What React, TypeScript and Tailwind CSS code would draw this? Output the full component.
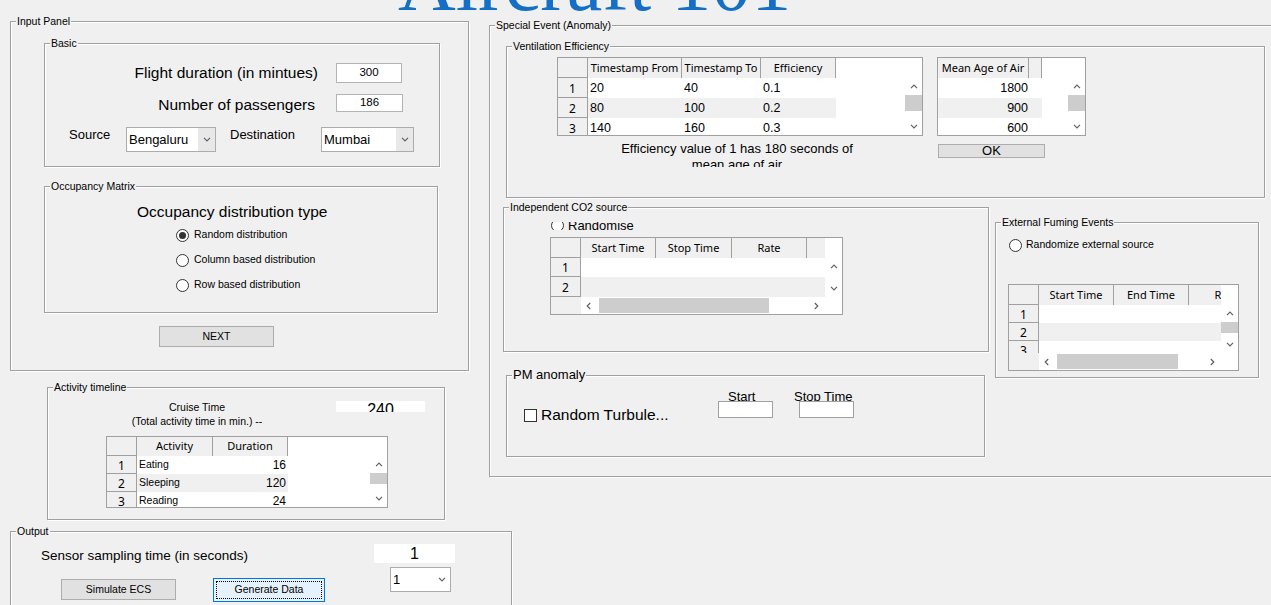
import React from 'react';

const etched = 'border border-[#a0a0a0] shadow-[inset_1px_1px_0_#fff,1px_1px_0_#fff]';

const Up = () => (
  <svg width="8" height="5" viewBox="0 0 8 5">
    <path d="M1 4.2L4 1.2L7 4.2" fill="none" stroke="#606060" strokeWidth="1.2" />
  </svg>
);
const Down = () => (
  <svg width="8" height="5" viewBox="0 0 8 5">
    <path d="M1 0.8L4 3.8L7 0.8" fill="none" stroke="#606060" strokeWidth="1.2" />
  </svg>
);
const Left = () => (
  <svg width="5" height="8" viewBox="0 0 5 8">
    <path d="M4.2 1L1.2 4L4.2 7" fill="none" stroke="#606060" strokeWidth="1.2" />
  </svg>
);
const Right = () => (
  <svg width="5" height="8" viewBox="0 0 5 8">
    <path d="M0.8 1L3.8 4L0.8 7" fill="none" stroke="#606060" strokeWidth="1.2" />
  </svg>
);

type PanelProps = { label: string; className: string; labelClass?: string; children?: React.ReactNode };

function Panel({ label, className, labelClass = 'top-[-7px] text-[10.5px] leading-[13px]', children }: PanelProps) {
  return (
    <div className={`relative shrink-0 ${etched} ${className}`}>
      <span className={`absolute left-[5px] bg-[#f0f0f0] px-[1px] text-black ${labelClass}`}>{label}</span>
      {children}
    </div>
  );
}

function Radio({ on = false }: { on?: boolean }) {
  return (
    <span className="flex h-[13px] w-[13px] shrink-0 items-center justify-center rounded-full border border-[#333] bg-white">
      {on && <span className="h-[7px] w-[7px] rounded-full bg-[#333]" />}
    </span>
  );
}

function Combo({ value, className }: { value: string; className: string }) {
  return (
    <div className={`flex shrink-0 border border-[#acacac] bg-white ${className}`}>
      <div className="flex flex-1 items-center pl-[2px] text-[13px] text-black">{value}</div>
      <div className="flex w-[17px] items-center justify-center bg-[#e8e8e8]">
        <Down />
      </div>
    </div>
  );
}

type Col = { label: string; w: string; align?: string };
type TableProps = {
  box: string;
  rowHdr?: boolean;
  cols: Col[];
  rows: string[][];
  rowH: string[];
  headH: string;
  cellText: string;
  thumb?: string;
  hthumb?: string;
};

function UiTable({ box, rowHdr = true, cols, rows, rowH, headH, cellText, thumb, hthumb }: TableProps) {
  return (
    <div className={`flex shrink-0 flex-col overflow-hidden border border-[#a0a0a0] bg-white ${box}`}>
      <div className="flex min-h-0 flex-1">
        <div className="flex min-w-0 flex-1 flex-col overflow-hidden">
          <div className={`flex shrink-0 ${headH}`}>
            {rowHdr && <div className="w-[30px] shrink-0 border-r border-b border-[#a0a0a0] bg-[#f0f0f0]" />}
            {cols.map((c, j) => (
              <div
                key={j}
                className={`flex shrink-0 items-center justify-center border-r border-[#a0a0a0] bg-[#f0f0f0] font-['Noto_Sans',sans-serif] text-[11px] whitespace-nowrap text-black ${c.w}`}
              >
                {c.label}
              </div>
            ))}
            <div className="flex-1 bg-white" />
          </div>
          {rows.map((r, i) => (
            <div key={i} className={`flex shrink-0 ${rowH[i]}`}>
              {rowHdr && (
                <div className="flex w-[30px] shrink-0 items-center justify-center border-r border-b border-[#a0a0a0] bg-[#f0f0f0] pt-[2px] font-['Noto_Sans',sans-serif] text-[12px] text-black">
                  {i + 1}
                </div>
              )}
              {cols.map((c, j) => (
                <div
                  key={j}
                  className={`flex shrink-0 items-center whitespace-nowrap text-black ${c.w} ${c.align ?? ''} ${i % 2 ? 'bg-[#f0f0f0]' : 'bg-white'} ${cellText}`}
                >
                  {r[j] ?? ''}
                </div>
              ))}
              <div className="flex-1 bg-white" />
            </div>
          ))}
        </div>
        <div className="flex w-[17px] shrink-0 flex-col bg-white">
          <div className={`shrink-0 ${headH}`} />
          <div className="flex h-[17px] shrink-0 items-center justify-center">
            <Up />
          </div>
          {thumb && <div className={`shrink-0 bg-[#cdcdcd] ${thumb}`} />}
          <div className="flex-1" />
          <div className="flex h-[17px] shrink-0 items-center justify-center">
            <Down />
          </div>
        </div>
      </div>
      {hthumb && (
        <div className="flex h-[17px] shrink-0">
          <div className="w-[30px] shrink-0 bg-[#f0f0f0]" />
          <div className="flex flex-1 items-center bg-white">
            <div className="flex h-full w-[15px] shrink-0 items-center justify-center">
              <Left />
            </div>
            <div className={`h-[15px] shrink-0 bg-[#cdcdcd] ${hthumb}`} />
            <div className="flex-1" />
            <div className="flex h-full w-[17px] shrink-0 items-center justify-center">
              <Right />
            </div>
          </div>
          <div className="w-[17px] shrink-0 bg-white" />
        </div>
      )}
    </div>
  );
}

const Btn = ({ label, className }: { label: string; className: string }) => (
  <div className={`flex shrink-0 items-center justify-center border border-[#adadad] bg-[#e1e1e1] text-[10.5px] text-black ${className}`}>
    {label}
  </div>
);

const Field = ({ value, className }: { value: string; className: string }) => (
  <div className={`flex shrink-0 items-center justify-center border border-[#b4b4b4] bg-white text-[11.5px] text-black ${className}`}>
    {value}
  </div>
);

export default function App() {
  return (
    <div className="h-[605px] w-[1271px] overflow-hidden bg-[#f0f0f0] font-['Liberation_Sans',Arial,sans-serif] text-black">
      {/* title, mostly scrolled off the top */}
      <div className="h-[14px] overflow-hidden">
        <div className="mt-[-57px] pl-[398px] font-['Liberation_Serif',serif] text-[80px] leading-[80px] whitespace-nowrap text-[#1570c5]">
          Aircraft 101
        </div>
      </div>

      <div className="mt-[7px] flex items-start">
        {/* left column */}
        <div className="ml-[10px] flex w-[459px] shrink-0 flex-col">
          <Panel label="Input Panel" className="h-[350px] w-[459px]">
            <Panel label="Basic" className="mt-[21px] ml-[33px] h-[124px] w-[396px]">
              <div className="mt-[19px] flex items-center">
                <div className="w-[273px] text-right text-[15.5px] leading-[20px]">Flight duration (in mintues)</div>
                <Field value="300" className="ml-[18px] h-[20px] w-[66px]" />
              </div>
              <div className="mt-[11px] flex items-start">
                <div className="mt-[2px] w-[270px] text-right text-[15.5px] leading-[18px]">Number of passengers</div>
                <Field value="186" className="ml-[21px] h-[18px] w-[67px]" />
              </div>
              <div className="mt-[13px] flex items-start">
                <div className="ml-[24px] w-[57px] text-[13px] leading-[15px]">Source</div>
                <Combo value="Bengaluru" className="h-[25px] w-[90px]" />
                <div className="ml-[14px] w-[91px] text-[13px] leading-[15px]">Destination</div>
                <Combo value="Mumbai" className="h-[25px] w-[93px]" />
              </div>
            </Panel>

            <Panel label="Occupancy Matrix" className="mt-[19px] ml-[33px] h-[127px] w-[394px]">
              <div className="mt-[16px] ml-[92px] text-[15.5px] leading-[18px]">Occupancy distribution type</div>
              <div className="mt-[7px] ml-[131px] flex h-[14px] items-center gap-[5px] text-[10.5px]">
                <Radio on />
                <span>Random distribution</span>
              </div>
              <div className="mt-[11px] ml-[131px] flex h-[14px] items-center gap-[5px] text-[10.5px]">
                <Radio />
                <span>Column based distribution</span>
              </div>
              <div className="mt-[11px] ml-[131px] flex h-[14px] items-center gap-[5px] text-[10.5px]">
                <Radio />
                <span>Row based distribution</span>
              </div>
            </Panel>

            <Btn label="NEXT" className="mt-[13px] ml-[148px] h-[21px] w-[115px]" />
          </Panel>

          <Panel label="Activity timeline" className="mt-[16px] ml-[37px] h-[133px] w-[398px]">
            <div className="flex items-start">
              <div className="mt-[12px] ml-[79px] w-[140px] text-center text-[10.5px] leading-[14px]">
                <div>Cruise Time</div>
                <div className="whitespace-nowrap">(Total activity time in min.) --</div>
              </div>
              <div className="mt-[13px] ml-[69px] h-[11px] w-[89px] overflow-hidden bg-white text-center text-[16px] leading-[18px]">
                240
              </div>
            </div>
            <div className="mt-[8px] ml-[58px]">
              <UiTable
                box="h-[72px] w-[282px]"
                headH="h-[19px]"
                rowH={['h-[18px]', 'h-[18px]', 'h-[18px]']}
                cols={[
                  { label: 'Activity', w: 'w-[76px]', align: 'justify-start pl-[2px] text-[10.5px]' },
                  { label: 'Duration', w: 'w-[75px]', align: 'justify-end pr-[2px] text-[12px]' },
                ]}
                rows={[
                  ['Eating', '16'],
                  ['Sleeping', '120'],
                  ['Reading', '24'],
                ]}
                cellText=""
                thumb="h-[11px]"
              />
            </div>
          </Panel>
        </div>

        {/* right column */}
        <Panel label="Special Event (Anomaly)" className="mt-[4px] ml-[20px] h-[452px] w-[790px]">
          <Panel label="Ventilation Efficiency" className="mt-[20px] ml-[16px] h-[152px] w-[759px]">
            <div className="mt-[10px] flex items-start">
              <div className="ml-[50px] flex flex-col">
                <UiTable
                  box="h-[79px] w-[366px]"
                  headH="h-[20px]"
                  rowH={['h-[20px]', 'h-[20px]', 'h-[20px]']}
                  cols={[
                    { label: 'Timestamp From', w: 'w-[94px]', align: 'justify-start pl-[2px]' },
                    { label: 'Timestamp To', w: 'w-[79px]', align: 'justify-start pl-[2px]' },
                    { label: 'Efficiency', w: 'w-[75px]', align: 'justify-start pl-[2px]' },
                  ]}
                  rows={[
                    ['20', '40', '0.1'],
                    ['80', '100', '0.2'],
                    ['140', '160', '0.3'],
                  ]}
                  cellText="text-[12.5px]"
                  thumb="h-[16px]"
                />
                <div className="mt-[5px] ml-[59px] h-[26px] w-[242px] overflow-hidden text-center text-[13px] leading-[16px]">
                  Efficiency value of 1 has 180 seconds of mean age of air
                </div>
              </div>
              <div className="ml-[14px] flex flex-col">
                <UiTable
                  box="h-[79px] w-[149px]"
                  rowHdr={false}
                  headH="h-[20px]"
                  rowH={['h-[20px]', 'h-[20px]', 'h-[20px]']}
                  cols={[
                    { label: 'Mean Age of Air', w: 'w-[91px]', align: 'justify-end pr-[1px]' },
                    { label: '', w: 'w-[13px]' },
                  ]}
                  rows={[['1800'], ['900'], ['600']]}
                  cellText="text-[12.5px]"
                  thumb="h-[16px]"
                />
                <Btn label="OK" className="mt-[8px] ml-[1px] h-[14px] w-[107px] text-[13px]" />
              </div>
            </div>
          </Panel>

          <div className="flex items-start">
            <div className="mt-[9px] ml-[13px] flex flex-col">
              <Panel label="Independent CO2 source" className="h-[145px] w-[486px]">
                <div className="mt-[14px] ml-[47px] h-[8px] w-[100px] overflow-hidden">
                  <div className="mt-[-4px] flex h-[15px] items-center gap-[4px] text-[13px] leading-[15px]">
                    <Radio />
                    <span>Randomise</span>
                  </div>
                </div>
                <div className="mt-[7px] ml-[46px]">
                  <UiTable
                    box="h-[78px] w-[293px]"
                    headH="h-[20px]"
                    rowH={['h-[19px]', 'h-[20px]']}
                    cols={[
                      { label: 'Start Time', w: 'w-[75px]' },
                      { label: 'Stop Time', w: 'w-[76px]' },
                      { label: 'Rate', w: 'w-[75px]' },
                      { label: '', w: 'w-[75px]' },
                    ]}
                    rows={[[], []]}
                    cellText=""
                    hthumb="ml-[3px] w-[170px]"
                  />
                </div>
              </Panel>

              <Panel
                label="PM anomaly"
                className="mt-[23px] ml-[3px] h-[82px] w-[479px]"
                labelClass="top-[-9px] text-[13px] leading-[15px]"
              >
                <div className="flex items-start">
                  <div className="mt-[32px] ml-[17px] flex h-[14px] w-[194px] shrink-0 items-center gap-[4px]">
                    <span className="h-[13px] w-[13px] shrink-0 border border-[#333] bg-white" />
                    <span className="text-[15.5px] leading-[18px] whitespace-nowrap">Random Turbule...</span>
                  </div>
                  <div className="mt-[15px] flex w-[55px] shrink-0 flex-col">
                    <div className="h-[10px] overflow-hidden pl-[10px] text-[13px] leading-[12px]">Start</div>
                    <div className="h-[17px] border border-[#a0a0a0] bg-white" />
                  </div>
                  <div className="mt-[15px] ml-[21px] flex w-[60px] shrink-0 flex-col">
                    <div className="h-[10px] overflow-hidden text-[13px] leading-[12px] whitespace-nowrap">Stop Time</div>
                    <div className="ml-[5px] h-[17px] w-[55px] border border-[#a0a0a0] bg-white" />
                  </div>
                </div>
              </Panel>
            </div>

            <Panel label="External Fuming Events" className="mt-[24px] ml-[6px] h-[156px] w-[264px]">
              <div className="mt-[15px] ml-[13px] flex h-[14px] items-center gap-[4px] text-[10.5px]">
                <Radio />
                <span>Randomize external source</span>
              </div>
              <div className="mt-[32px] ml-[12px]">
                <UiTable
                  box="h-[87px] w-[231px]"
                  headH="h-[20px]"
                  rowH={['h-[18px]', 'h-[18px]', 'h-[18px]']}
                  cols={[
                    { label: 'Start Time', w: 'w-[75px]' },
                    { label: 'End Time', w: 'w-[75px]' },
                    { label: 'Rate', w: 'w-[75px]' },
                  ]}
                  rows={[[], [], []]}
                  cellText=""
                  thumb="h-[11px]"
                  hthumb="ml-[3px] w-[121px]"
                />
              </div>
            </Panel>
          </div>
        </Panel>
      </div>

      {/* output */}
      <Panel label="Output" className="mt-[11px] ml-[10px] h-[90px] w-[502px]">
        <div className="flex items-start">
          <div className="flex w-[320px] shrink-0 flex-col">
            <div className="mt-[16px] ml-[30px] text-[13.5px] leading-[16px] whitespace-nowrap">
              Sensor sampling time (in seconds)
            </div>
            <div className="mt-[14px] flex items-start pl-[50px]">
              <Btn label="Simulate ECS" className="mt-[1px] h-[21px] w-[115px]" />
              <div className="ml-[37px] flex h-[24px] w-[112px] shrink-0 items-center justify-center border border-[#0078d7] bg-[#e5f1fb] p-[2px]">
                <div className="flex h-full w-full items-center justify-center border border-dotted border-black text-[10.5px]">
                  Generate Data
                </div>
              </div>
            </div>
          </div>
          <div className="ml-[43px] flex flex-col">
            <div className="mt-[12px] h-[19px] w-[81px] bg-white text-center text-[16px] leading-[19px]">1</div>
            <div className="mt-[4px] ml-[16px] flex h-[25px] w-[61px] border border-[#acacac] bg-white">
              <div className="flex flex-1 items-center pl-[2px] text-[13px]">1</div>
              <div className="flex w-[17px] items-center justify-center">
                <Down />
              </div>
            </div>
          </div>
        </div>
      </Panel>
    </div>
  );
}
